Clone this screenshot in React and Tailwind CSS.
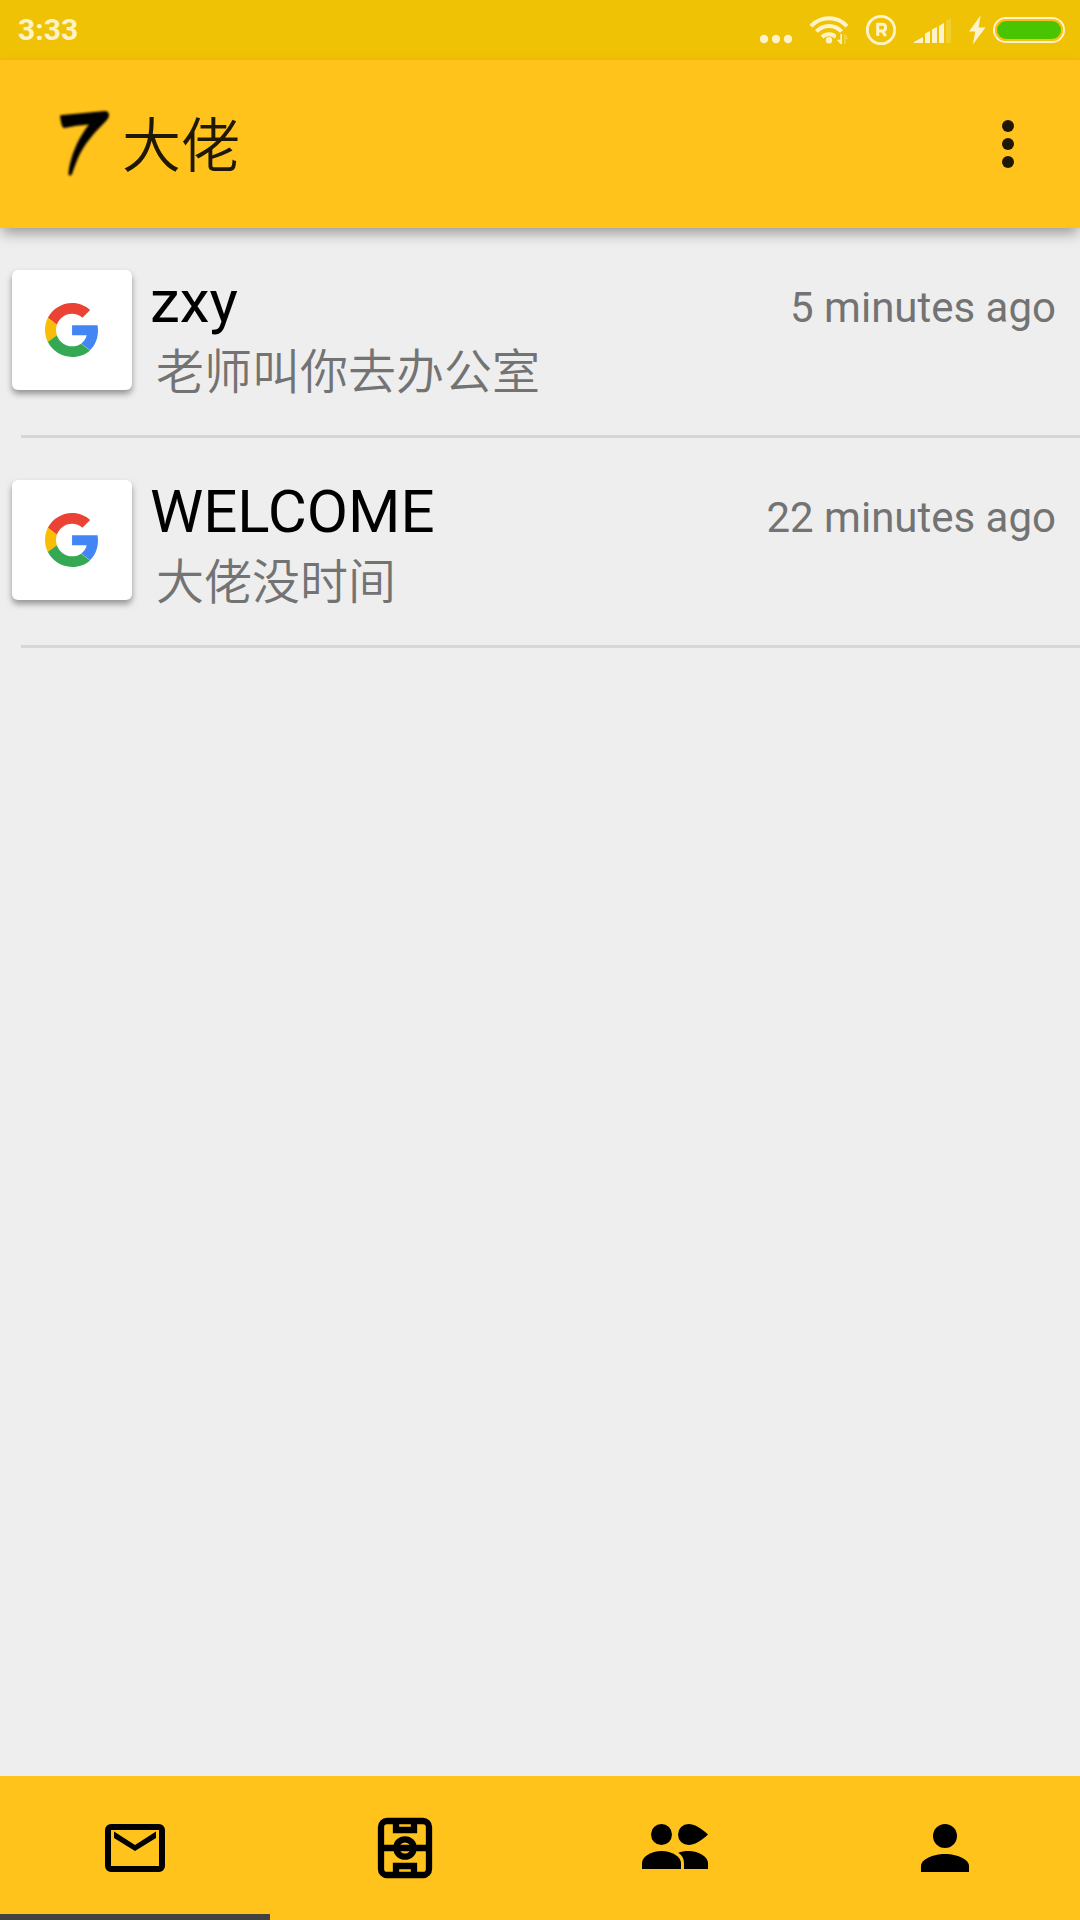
import React from "react";

const LATIN = "font-[Roboto,'Noto_Sans_CJK_SC',sans-serif]";

const messages = [
  { name: "zxy", text: "老师叫你去办公室", time: "5 minutes ago" },
  { name: "WELCOME", text: "大佬没时间", time: "22 minutes ago" },
];

function StatusIcons() {
  return (
    <svg width="340" height="60" viewBox="0 0 340 60" className="shrink-0" fill="#fff3cc">
      <circle cx="24" cy="39" r="4.2" />
      <circle cx="36" cy="39" r="4.2" />
      <circle cx="48" cy="39" r="4.2" />
      {/* wifi */}
      <g fill="none" stroke="#fff3cc" strokeWidth="4">
        <path d="M71 26.2a24.500 24.500 0 0 1 36 0" />
        <path d="M76.500 31.500a17 17 0 0 1 25 0" />
        <path d="M82 37a10 10 0 0 1 14 0" />
      </g>
      <circle cx="89" cy="40.200" r="3.200" />
      <path d="M96 34h6v10h-2.500l-3.500-5z" fill="#f0c205" />
      <path d="M100.300 34h1.700v10h-1.600l-3.700-4.300h3.600z" />
      <path d="M104 44V34h1l4 5h-3v5z" opacity=".3" />
      {/* registered mark */}
      <circle cx="141" cy="30" r="13.700" fill="none" stroke="#fff3cc" strokeWidth="2.800" />
      <path d="M137.700 36V24.300h4.800q3 0 3 2.800v1.200q0 2.600-3 2.600h-4.800M142.300 31l3.400 5" fill="none" stroke="#fff3cc" strokeWidth="3" />
      {/* cell signal */}
      <path d="M174 43v-1l9-5v6zM185 43V33.500l5-2.500v12zM192 43V29.500l5-2.500v16zM199 43V26l5-3v20z" />
      <path d="M206 43V20.500l5-2.500v25z" opacity=".2" />
      {/* battery */}
      <path d="M240.500 15.500L229 31.500h6.300L232.800 44.500 245.500 27.500h-6.800z" />
      <rect x="254" y="18" width="70" height="24" rx="12" fill="none" stroke="#fff3cc" strokeWidth="2" />
      <rect x="255" y="19" width="68" height="22" rx="11" fill="#ffbf0f" />
      <rect x="257" y="21" width="64" height="18" rx="9" fill="#49c400" />
    </svg>
  );
}

function StatusBar() {
  return (
    <div className="flex h-[60px] shrink-0 items-center justify-between bg-[#f0c205] pl-[18px]">
      <span className="font-[Roboto,sans-serif] text-[30px] leading-none font-bold text-[#fff3cc]">3:33</span>
      <StatusIcons />
    </div>
  );
}

function AppBar() {
  return (
    <header className="z-10 flex h-[168px] shrink-0 items-center justify-between bg-[#ffc31c] shadow-[0_7px_13px_-2px_rgba(0,0,0,0.36)]">
      <div className="flex items-center">
        <svg width="72" height="72" viewBox="48 108 72 72" className="ml-12 blur-[0.9px]">
          <path d="M60 116Q60 115 63 115C78 114 91 112 105 111Q109 111 109 115.500Q109 118 106 121C94 133 85 143 78 158Q74 168 72 174Q70 177 68.500 174.500C69 163 75 142 89 124.500Q76 125 64.500 128Q62 128 61 122Z" />
        </svg>
        <h1 className={`${LATIN} mt-[5px] ml-[2px] text-[59px] leading-[72px] font-[350] text-[#1f1805]`}>大佬</h1>
      </div>
      <svg width="60" height="72" viewBox="978 108 60 72" className="mr-[42px]" fill="#1f1805">
        <circle cx="1008" cy="126" r="6" />
        <circle cx="1008" cy="144" r="6" />
        <circle cx="1008" cy="162" r="6" />
      </svg>
    </header>
  );
}

function GoogleMark() {
  return (
    <svg width="53" height="54" viewBox="0 0 47 48" className="mr-px" preserveAspectRatio="none">
      <path fill="#EA4335" d="M24 9.500c3.540 0 6.710 1.220 9.210 3.600l6.850-6.850C35.900 2.380 30.470 0 24 0 14.620 0 6.510 5.380 2.560 13.220l7.980 6.190C12.430 13.720 17.740 9.500 24 9.500z" />
      <path fill="#4285F4" d="M46.980 24.550c0-1.570-.15-3.090-.38-4.850H24v9.020h12.940c-.58 2.960-2.260 5.480-4.780 7.180l7.730 6c4.510-4.180 7.090-10.060 7.090-17.350z" />
      <path fill="#FBBC05" d="M10.530 28.590c-.48-1.450-.76-2.990-.76-4.590s.27-3.140.76-4.590l-7.980-6.190C.92 16.460 0 20.120 0 24c0 3.880.92 7.540 2.560 10.780l7.970-6.190z" />
      <path fill="#34A853" d="M24 48c6.480 0 11.930-2.130 15.890-5.810l-7.730-6c-2.150 1.450-4.920 2.300-8.160 2.300-6.260 0-11.570-4.220-13.470-9.910l-7.980 6.190C6.510 42.620 14.620 48 24 48z" />
    </svg>
  );
}

function MessageRow({ name, text, time }) {
  return (
    <li className="flex h-[210px] flex-col">
      <div className="flex h-[207px] pt-[42px] pl-3">
        <div className="flex size-[120px] shrink-0 items-center justify-center rounded-[6px] bg-white shadow-[0_4px_6px_rgba(0,0,0,0.38)]">
          <GoogleMark />
        </div>
        <div className="ml-[18px] flex-1">
          <p className="mt-[-3px] font-[Roboto,sans-serif] text-[60px] leading-[70px] text-black">{name}</p>
          <p className={`${LATIN} mt-[3px] ml-[6px] text-[48px] leading-[66px] font-[350] text-[#737373]`}>{text}</p>
        </div>
        <p className="mt-[13px] mr-6 font-[Roboto,sans-serif] text-[42px] leading-[50px] text-[#737373]">{time}</p>
      </div>
      <div className="ml-[21px] h-[3px] bg-[#d6d6d6]" />
    </li>
  );
}

const tabs = [
  {
    label: "Mail",
    icon: (
      <>
        <rect x="3" y="5" width="18" height="14" rx="1" fill="none" stroke="black" strokeWidth="2" />
        <path d="M5 6.500L12 11l7-4.500v2.200L12 13 5 8.700z" />
      </>
    ),
  },
  {
    label: "Field",
    icon: (
      <g fill="none" stroke="black" strokeWidth="2.100">
        <rect x="4" y="3" width="16" height="18" rx="2" />
        <circle cx="12" cy="12" r="2.900" />
        <path d="M4 12h16M9 3v3h6V3M9 21v-3h6v3" />
      </g>
    ),
  },
  {
    label: "Friends",
    icon: (
      <>
        <circle cx="7.500" cy="7.500" r="3.500" />
        <path d="M16.500 4C18.500 4 20.500 5.200 23 7.500C20.500 9.800 18.500 11 16.500 11A3.500 3.500 0 1 1 16.500 4z" />
        <path d="M1 19v-2c0-2 3-4 6.500-4s6.500 2 6.500 4v2z" />
        <path d="M15 19v-2c0-1.500-.7-2.600-1.900-3.400C14 13.200 15.200 13 16.500 13c3.500 0 6.500 2 6.500 4v2z" />
      </>
    ),
  },
  {
    label: "Profile",
    icon: (
      <>
        <circle cx="12" cy="8" r="4" />
        <path d="M4 20v-2c0-2.200 4-4 8-4s8 1.800 8 4v2z" />
      </>
    ),
  },
];

function TabBar() {
  return (
    <nav className="grid h-36 shrink-0 grid-cols-4 bg-[#ffc31c]">
      {tabs.map(({ label, icon }, i) => (
        <button key={label} aria-label={label} className="flex flex-col items-center justify-between pt-9">
          <svg width="72" height="72" viewBox="0 0 24 24">{icon}</svg>
          {i === 0 && <span className="h-[6px] w-full bg-[#424242]" />}
        </button>
      ))}
    </nav>
  );
}

export default function App() {
  return (
    <div className="flex h-[1920px] w-[1080px] flex-col overflow-hidden bg-[#eeeeee]">
      <StatusBar />
      <AppBar />
      <ul className="flex-1">
        {messages.map((m) => (
          <MessageRow key={m.name} {...m} />
        ))}
      </ul>
      <TabBar />
    </div>
  );
}
